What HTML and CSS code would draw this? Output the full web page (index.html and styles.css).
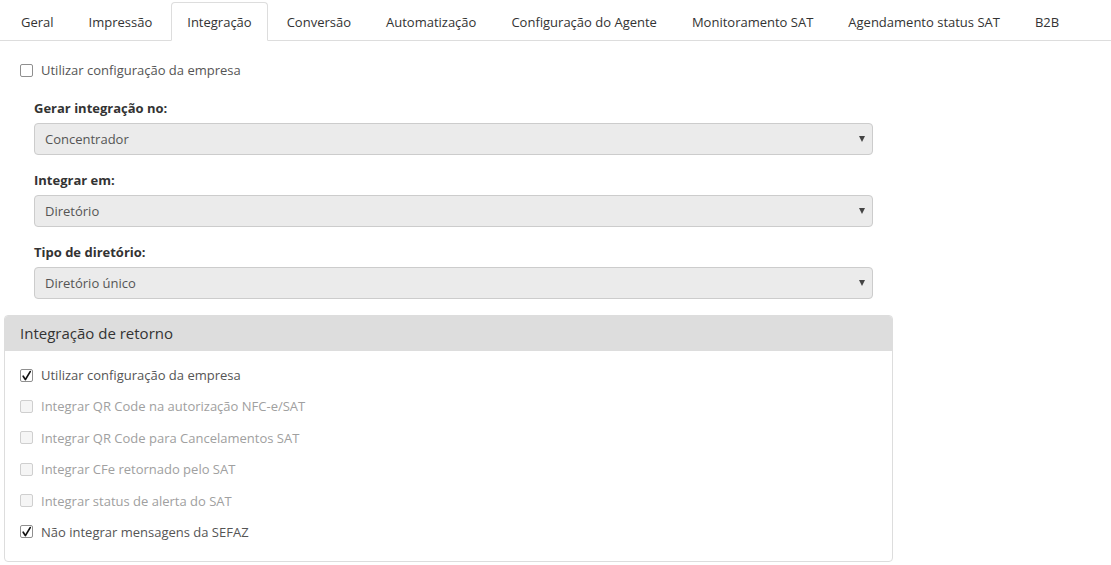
FILE: index.html
```html
<!DOCTYPE html>
<html lang="pt-BR">
<head>
<meta charset="utf-8">
<title>Integração</title>
<link rel="stylesheet" href="styles.css">
</head>
<body>
<div class="page">
  <ul class="tabs">
    <li class="tab">Geral</li>
    <li class="tab">Impressão</li>
    <li class="tab active">Integração</li>
    <li class="tab">Conversão</li>
    <li class="tab">Automatização</li>
    <li class="tab">Configuração do Agente</li>
    <li class="tab">Monitoramento SAT</li>
    <li class="tab">Agendamento status SAT</li>
    <li class="tab">B2B</li>
  </ul>

  <div class="content">
    <label class="check top-check"><span class="box"></span>Utilizar configuração da empresa</label>

    <div class="fields">
      <div class="field">
        <div class="field-label">Gerar integração no:</div>
        <div class="select"><span>Concentrador</span><span class="arrow"></span></div>
      </div>
      <div class="field">
        <div class="field-label">Integrar em:</div>
        <div class="select"><span>Diretório</span><span class="arrow"></span></div>
      </div>
      <div class="field">
        <div class="field-label">Tipo de diretório:</div>
        <div class="select"><span>Diretório único</span><span class="arrow"></span></div>
      </div>
    </div>

    <div class="panel">
      <div class="panel-head">Integração de retorno</div>
      <div class="panel-body">
        <label class="check"><span class="box"><svg viewBox="0 0 13 13"><path d="M3.2 7.2 L5.4 10.6 L10.2 2.6" /></svg></span>Utilizar configuração da empresa</label>
        <label class="check disabled"><span class="box"></span>Integrar QR Code na autorização NFC-e/SAT</label>
        <label class="check disabled"><span class="box"></span>Integrar QR Code para Cancelamentos SAT</label>
        <label class="check disabled"><span class="box"></span>Integrar CFe retornado pelo SAT</label>
        <label class="check disabled"><span class="box"></span>Integrar status de alerta do SAT</label>
        <label class="check"><span class="box"><svg viewBox="0 0 13 13"><path d="M3.2 7.2 L5.4 10.6 L10.2 2.6" /></svg></span>Não integrar mensagens da SEFAZ</label>
      </div>
    </div>
  </div>
</div>
</body>
</html>
```

FILE: styles.css
```css
* { box-sizing: border-box; }

html, body {
  margin: 0;
  padding: 0;
  background: #fff;
}

body {
  font-family: "Open Sans", "Noto Sans", "Liberation Sans", sans-serif;
  font-size: 13px;
  color: #333;
}

.page {
  padding-top: 2px;
}

.tabs {
  list-style: none;
  margin: 0;
  padding: 0 0 0 5px;
  display: flex;
  border-bottom: 1px solid #ddd;
}

.tab {
  padding: 10px 15px 8px;
  line-height: 19px;
  border: 1px solid transparent;
  border-radius: 4px 4px 0 0;
  margin-right: 3px;
  margin-bottom: -1px;
  color: #333;
  white-space: nowrap;
}

.tab.active {
  border-color: #ddd #ddd transparent #ddd;
  background: #fff;
}

.content {
  padding: 19px 0 0 5px;
  width: 893px;
}

.check {
  display: flex;
  align-items: center;
  line-height: 20px;
  color: #555;
  font-size: 13px;
}

.top-check {
  padding-left: 15px;
}

.box {
  width: 13px;
  height: 13px;
  border: 1px solid #8f8f8f;
  border-radius: 2px;
  background: #fff;
  margin-right: 8px;
  flex: none;
  position: relative;
}

.box svg {
  position: absolute;
  left: -1px;
  top: -1px;
  width: 13px;
  height: 13px;
  fill: none;
  stroke: #111;
  stroke-width: 1.7;
  stroke-linecap: round;
  stroke-linejoin: round;
}

.check.disabled {
  color: #a0a0a0;
}

.check.disabled .box {
  border-color: #cfcfcf;
  background: #f5f5f5;
}

.fields {
  padding: 18px 20px 0 29px;
  display: flex;
  flex-direction: column;
  gap: 15px;
}

.field-label {
  font-weight: 700;
  line-height: 20px;
  color: #333;
  margin-bottom: 5px;
}

.select {
  height: 32px;
  border: 1px solid #ccc;
  border-radius: 4px;
  background: #ebebeb;
  display: flex;
  align-items: center;
  justify-content: space-between;
  padding: 0 7px 0 10px;
  color: #555;
  font-size: 13px;
}

.arrow {
  width: 0;
  height: 0;
  border-left: 3.5px solid transparent;
  border-right: 3.5px solid transparent;
  border-top: 6px solid #444;
  margin-top: -1px;
}

.panel {
  margin-top: 16px;
  border: 1px solid #ddd;
  border-radius: 4px;
  width: 889px;
  margin-left: -1px;
}

.panel-head {
  background: #ddd;
  height: 35px;
  padding: 0 15px;
  display: flex;
  align-items: center;
  font-size: 15px;
  color: #333;
  border-bottom: 1px solid #ddd;
  border-radius: 3px 3px 0 0;
}

.panel-body {
  padding: 14px 15px 19px;
  display: flex;
  flex-direction: column;
  gap: 11.4px;
}
```
